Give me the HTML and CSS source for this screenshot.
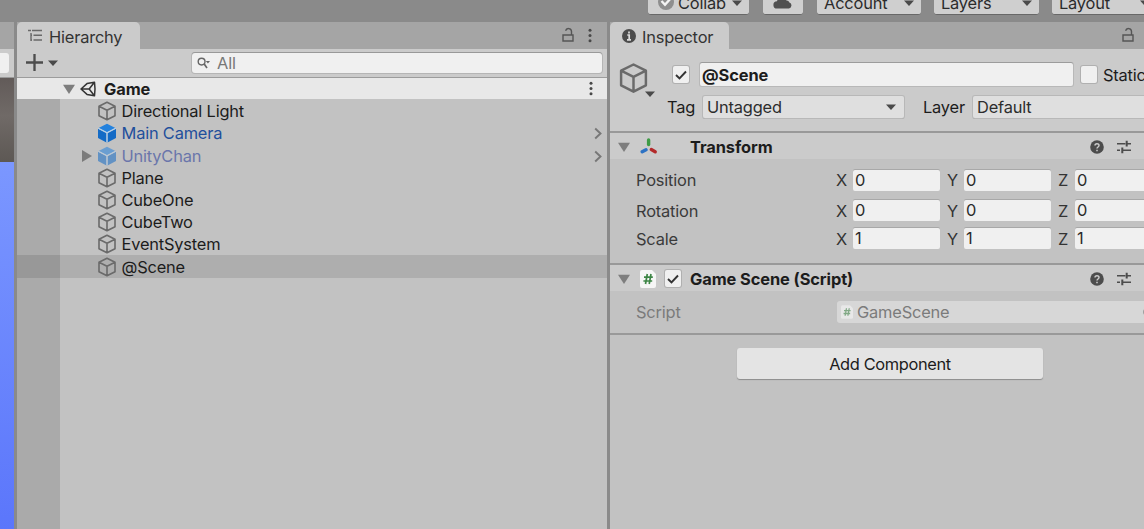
FILE: index.html
```html
<!DOCTYPE html>
<html lang="en">
<head>
<meta charset="utf-8">
<title>Hierarchy and Inspector</title>
<link rel="stylesheet" href="styles.css">
</head>
<body>
<svg class="defs" width="0" height="0">
  <symbol id="cube" viewBox="0 0 20 20"><path d="M10 1.3 18 5.3V14.7L10 18.8 2 14.7V5.3ZM2 5.3 10 9.3 18 5.3M10 9.3V18.8" fill="none" stroke="currentColor" stroke-width="1.6" stroke-linejoin="round"/></symbol>
  <symbol id="prefab" viewBox="0 0 20 20"><path class="p-top" d="M10 .8 18.4 4.9 10 9.2 1.6 4.9Z"/><path class="p-side" d="M1 5.8 9.5 10.2V19.4L1 15ZM19 5.8 10.5 10.2V19.4L19 15Z"/><path class="p-seam" d="M1.4 5.2 10 9.7 18.6 5.2M10 9.7V19.2"/></symbol>
  <symbol id="down" viewBox="0 0 12 8" preserveAspectRatio="none"><path d="M0 .5H12L6 8Z" fill="currentColor"/></symbol>
  <symbol id="lock" viewBox="0 0 12 16"><path d="M1 8H11V14H1ZM9.5 8V4.5A3 3 0 0 0 3.6 3.8" fill="none" stroke="currentColor" stroke-width="1.4"/></symbol>
  <symbol id="dots" viewBox="0 0 4 16"><g fill="currentColor"><circle cx="2" cy="2.4" r="1.6"/><circle cx="2" cy="8" r="1.6"/><circle cx="2" cy="13.6" r="1.6"/></g></symbol>
  <symbol id="chev" viewBox="0 0 8 12"><path d="M1.2 1 6.5 6 1.2 11" fill="none" stroke="currentColor" stroke-width="1.9"/></symbol>
  <symbol id="check" viewBox="0 0 12 10"><path d="M1 5 4.5 8.5 11 1.5" fill="none" stroke="currentColor" stroke-width="1.9"/></symbol>
  <symbol id="help" viewBox="0 0 14 14"><circle cx="7" cy="7" r="6.8" fill="#4c4c4c"/><path d="M5 5.6C5 3 9 3 9 5.5 9 7 7 7 7 8.6M7 9.7V11.2" fill="none" stroke="#cbcbcb" stroke-width="1.5"/></symbol>
  <symbol id="preset" viewBox="0 0 14 14"><path d="M0 3.7H8.5M10 3.7H14M0 10.3H3M5.5 10.3H14" fill="none" stroke="#4c4c4c" stroke-width="1.4"/><path d="M9.7 .8V6.6M5.3 7.4V13.2" stroke="#4c4c4c" stroke-width="2"/></symbol>
  <symbol id="script" viewBox="0 0 16 18"><path d="M2 0H12L16 4V16Q16 18 14 18H2Q0 18 0 16V2Q0 0 2 0Z" fill="#f6f6f6"/><path d="M7.3 4 5.5 14M11 4 9.2 14M4 7.2H12.8M3.4 11H12.2" fill="none" stroke="#3d8545" stroke-width="1.7"/></symbol>
</svg>

<header class="topbar">
  <div class="tbtn collab"><svg class="badge" viewBox="0 0 16 16"><circle cx="8" cy="8" r="8" fill="#8e8e8e"/><path d="M3.5 7 7 10.8 13 4" fill="none" stroke="#f4f4f4" stroke-width="2.4"/></svg><span>Collab</span><svg class="arr"><use href="#down"/></svg></div>
  <div class="tbtn cloud"><svg width="20" height="14" viewBox="0 0 20 14"><path d="M4 13.5A3.6 3.6 0 0 1 4 6.3 5 5 0 0 1 13.4 5.6 3 3 0 0 1 16.4 7.4 3.2 3.2 0 0 1 16 13.5Z" fill="#505050"/></svg></div>
  <div class="tbtn account"><span>Account</span><svg class="arr"><use href="#down"/></svg></div>
  <div class="tbtn layers"><span>Layers</span><svg class="arr"><use href="#down"/></svg></div>
  <div class="tbtn layout"><span>Layout</span><svg class="arr"><use href="#down"/></svg></div>
</header>

<main class="dock">
  <aside class="scene">
    <div class="scene-tab"></div>
    <div class="scene-tools"><div class="scene-field"></div></div>
    <div class="scene-ground"></div>
    <div class="scene-sky"></div>
  </aside>

  <section class="hierarchy">
    <div class="tabs">
      <div class="tab htab">
        <svg class="listicon" viewBox="0 0 15 13"><path d="M0 1.5H3M4 1.5H14M5.5 6.2H14M5.5 11H14M3 4V12M3 6.2H4M3 11H4" fill="none" stroke="#696969" stroke-width="1.4"/></svg>
        <span>Hierarchy</span>
      </div>
      <svg class="lock"><use href="#lock"/></svg>
      <svg class="dots"><use href="#dots"/></svg>
    </div>
    <div class="toolbar">
      <svg class="plus" viewBox="0 0 16 16"><path d="M8 0V16M0 8H16" stroke="#4d4d4d" stroke-width="2.2"/></svg>
      <svg class="arr"><use href="#down"/></svg>
      <div class="search">
        <svg width="13" height="12" viewBox="0 0 13 12"><path d="M7.2 7 10 11" stroke="#666" stroke-width="1.7"/><circle cx="4.6" cy="4.6" r="3.4" fill="none" stroke="#666" stroke-width="1.4"/><path d="M8.8 4H13L10.9 6.6Z" fill="#666"/></svg>
        <span>All</span>
      </div>
    </div>
    <div class="game">
      <svg class="fold"><use href="#down"/></svg>
      <svg class="unity" viewBox="0 0 16 16"><path d="M14.5 1.2 7 2.6 1 8 7 13.4 14.5 14.8 15 8ZM1.5 8H9.2M9.2 8 14 1.8M9.2 8 14 14.2" fill="none" stroke="#333" stroke-width="1.5" stroke-linejoin="round"/></svg>
      <b>Game</b>
      <svg class="dots"><use href="#dots"/></svg>
    </div>
    <div class="tree">
      <div class="row"><svg class="ico"><use href="#cube"/></svg><span>Directional Light</span></div>
      <div class="row blue"><svg class="ico"><use href="#prefab"/></svg><span>Main Camera</span><svg class="chev"><use href="#chev"/></svg></div>
      <div class="row pale"><svg class="expand" viewBox="0 0 10 12"><path d="M0 0 10 6 0 12Z" fill="#7b7b7b"/></svg><svg class="ico"><use href="#prefab"/></svg><span>UnityChan</span><svg class="chev"><use href="#chev"/></svg></div>
      <div class="row"><svg class="ico"><use href="#cube"/></svg><span>Plane</span></div>
      <div class="row"><svg class="ico"><use href="#cube"/></svg><span>CubeOne</span></div>
      <div class="row"><svg class="ico"><use href="#cube"/></svg><span>CubeTwo</span></div>
      <div class="row"><svg class="ico"><use href="#cube"/></svg><span>EventSystem</span></div>
      <div class="row selected"><svg class="ico"><use href="#cube"/></svg><span>@Scene</span></div>
    </div>
  </section>

  <section class="inspector">
    <div class="tabs">
      <div class="tab itab">
        <svg class="info" viewBox="0 0 14 14"><circle cx="7" cy="7" r="7" fill="#4b4b4b"/><path d="M7 2.5V4.5M5.3 6H7.2V10.7M5 10.9H9" stroke="#ddd" stroke-width="1.7" fill="none"/></svg>
        <span>Inspector</span>
      </div>
      <svg class="lock"><use href="#lock"/></svg>
    </div>
    <div class="objhead">
      <div class="objicon"><svg class="bigcube"><use href="#cube"/></svg><svg class="arr"><use href="#down"/></svg></div>
      <div class="objfields">
        <div class="namerow">
          <div class="cb"><svg><use href="#check"/></svg></div>
          <div class="namefield"><b>@Scene</b></div>
          <div class="cb static-cb"></div>
          <span>Static</span>
        </div>
        <div class="tagrow">
          <span class="l-tag">Tag</span>
          <div class="drop tagdrop"><span>Untagged</span><svg class="arr"><use href="#down"/></svg></div>
          <span class="l-layer">Layer</span>
          <div class="drop layerdrop"><span>Default</span></div>
        </div>
      </div>
    </div>
    <div class="comphead">
      <svg class="fold"><use href="#down"/></svg>
      <svg class="axes" viewBox="0 0 18 18"><g fill="none" stroke-width="3.4" stroke-linecap="round"><path d="M8.6 2V6.6" stroke="#3e9b45"/><path d="M6 11.8 2.2 13.8" stroke="#2c72c4"/><path d="M11.3 11.6 15.2 13.8" stroke="#b32a2a"/></g></svg>
      <b class="h-tr">Transform</b>
      <svg class="help"><use href="#help"/></svg><svg class="preset"><use href="#preset"/></svg>
    </div>
    <div class="transform">
      <div class="vec"><span class="lab">Position</span><i>X</i><div class="num">0</div><i>Y</i><div class="num">0</div><i>Z</i><div class="num">0</div></div>
      <div class="vec"><span class="lab">Rotation</span><i>X</i><div class="num">0</div><i>Y</i><div class="num">0</div><i>Z</i><div class="num">0</div></div>
      <div class="vec"><span class="lab">Scale</span><i>X</i><div class="num">1</div><i>Y</i><div class="num">1</div><i>Z</i><div class="num">1</div></div>
    </div>
    <div class="comphead">
      <svg class="fold"><use href="#down"/></svg>
      <svg class="scr"><use href="#script"/></svg>
      <div class="cb"><svg><use href="#check"/></svg></div>
      <b class="h-gs">Game Scene (Script)</b>
      <svg class="help"><use href="#help"/></svg><svg class="preset"><use href="#preset"/></svg>
    </div>
    <div class="scriptrow">
      <span class="l-script">Script</span>
      <div class="objfield"><svg class="scr-s"><use href="#script"/></svg><span>GameScene</span><svg class="pick" viewBox="0 0 12 12"><circle cx="6" cy="6" r="5" fill="none" stroke="#888" stroke-width="1.5"/></svg></div>
    </div>
    <div class="addwrap"><div class="add"><span>Add Component</span></div></div>
  </section>
</main>
</body>
</html>
```

FILE: styles.css
```css
* { box-sizing: border-box; }
body {
  margin: 0; width: 1144px; height: 529px; overflow: hidden;
  display: flex; flex-direction: column;
  background: #8a8a8a; color: #1c1c1c;
  font: 16.4px/20px Inter, "Liberation Sans", sans-serif;
  letter-spacing: -.18px;
}
b { letter-spacing: -.08px; }
svg { flex: none; display: block; }
span, b { white-space: nowrap; flex: none; }
.defs { position: absolute; }
.arr { width: 10px; height: 6px; color: #4a4a4a; }

.topbar { height: 22px; flex: none; display: flex; padding-left: 648px; background: #8a8a8a; }
.tbtn {
  height: 27px; margin-top: -12px; flex: none; display: flex; align-items: center;
  background: #cfcfcf; border-bottom: 1px solid #686868; border-radius: 3px;
}
.tbtn span { margin-top: 4px; color: #2b2b2b; }
.tbtn .arr { margin-left: auto; margin-top: 3px; }
.collab { width: 101px; margin-right: 14px; padding: 0 7px 0 10px; }
.collab .badge { width: 16px; height: 16px; margin: 1px 4px 0 0; }
.cloud { width: 40px; margin-right: 14px; justify-content: center; align-items: flex-end; padding-bottom: 5px; }
.account { width: 104px; margin-right: 13px; padding: 0 7px; }
.layers { width: 105px; margin-right: 13px; padding: 0 7px; }
.layout { width: 105px; padding: 0 7px; }

.dock { flex: 1; min-height: 0; display: flex; }
.scene { width: 14px; margin-right: 3px; display: flex; flex-direction: column; }
.scene-tab { height: 27px; background: #a5a5a5; }
.scene-tools { height: 28px; padding-top: 4px; background: #cbcbcb; }
.scene-field { width: 9px; height: 20px; background: #f0f0f0; border-radius: 0 3px 3px 0; }
.scene-ground { height: 85px; background: linear-gradient(#625b59, #706a67 45%, #5d5854); border-top: 1px solid #999; }
.scene-sky { flex: 1; background: linear-gradient(#7b97ff, #5b76fb); }

.hierarchy { width: 590px; margin-right: 3px; display: flex; flex-direction: column; background: #c2c2c2; }
.tabs { height: 27px; flex: none; display: flex; align-items: center; background: #a5a5a5; }
.tab { height: 27px; display: flex; align-items: center; background: #cbcbcb; border-radius: 5px 5px 0 0; color: #333; }
.tab span { margin-top: 3px; }
.htab { width: 123px; padding-left: 11px; }
.listicon { width: 15px; height: 13px; margin-right: 6px; }
.lock { width: 12px; height: 16px; margin-top: -1px; color: #555; }
.hierarchy .lock { margin-left: auto; }
.dots { width: 4px; height: 15px; color: #484848; }
.tabs .dots { margin: -1px 15px 0 14px; }
.toolbar { height: 29px; flex: none; display: flex; align-items: center; padding: 0 5px 1px 9px; background: #cbcbcb; border-bottom: 1px solid #9c9c9c; }
.plus { width: 17px; height: 17px; margin-right: 5px; }
.search { width: 410px; height: 20px; margin-left: auto; padding-left: 5px; display: flex; align-items: center; gap: 7px; background: #f0f0f0; border-radius: 3px; box-shadow: 0 -1px 0 #999, 0 0 0 1px #b5b5b5; color: #777; }
.game { height: 21px; flex: none; display: flex; align-items: center; padding: 0 14px 0 46px; background: #e8e8e8; }
.fold { width: 12px; height: 10px; color: #7e7e7e; }
.unity { width: 16px; height: 16px; margin: 0 8px 0 5px; }
.game .dots { margin-left: auto; }
.tree { flex: 1; padding-top: 1px; background: linear-gradient(90deg, #aaa 43px, #c2c2c2 43px); }
.row { height: 22.2px; display: flex; align-items: center; padding: 0 5px 0 80px; }
.ico { width: 20px; height: 20px; margin-right: 4.5px; color: #6a6a6a; }
.selected { padding-top: 1px; background: linear-gradient(90deg, #989898 43px, #aeaeae 43px); }
.blue { color: #1f4f9c; }
.pale { color: #6a76ab; padding-left: 65px; padding-top: 2px; }
.expand { width: 10px; height: 12px; margin-right: 5px; }
.p-top { fill: #2482de; }
.p-side { fill: #146bc6; }
.p-seam { fill: none; stroke: #b5d2ee; stroke-width: 1.1; }
.pale .ico { opacity: .55; }
.chev { width: 8px; height: 13px; margin-left: auto; color: #777; }

.inspector { width: 534px; flex: none; overflow: hidden; display: flex; flex-direction: column; background: #c2c2c2; }
.itab { width: 119px; padding-left: 12px; }
.info { width: 14px; height: 14px; margin: 1px 6px 0 0; }
.inspector .tabs .lock { margin: -1px 10px 0 auto; }
.objhead { height: 82px; flex: none; display: flex; background: #cbcbcb; }
.objicon { width: 57px; padding: 13px 0 0 8px; flex: none; }
.bigcube { width: 31px; height: 32px; color: #6a6a6a; }
.objicon .arr { margin-left: 27px; margin-top: -3px; }
.objfields { flex: none; }
.namerow { height: 25px; margin-top: 13px; display: flex; align-items: center; padding-left: 6px; }
.cb { width: 16px; height: 17px; flex: none; display: grid; place-items: center; background: #f0f0f0; border-radius: 2px; box-shadow: 0 0 0 1px #b0b0b0; color: #333; }
.cb svg { width: 12px; height: 10px; }
.namefield { width: 373px; height: 23px; margin-left: 11px; padding-left: 2px; display: flex; align-items: center; background: #f0f0f0; border-radius: 2px; box-shadow: 0 -1px 0 #9c9c9c, 0 0 0 1px #b8b8b8; }
.static-cb { margin: 0 6px 0 8px; }
.tagrow { height: 24px; margin-top: 8px; display: flex; align-items: center; }
.l-tag { width: 36px; }
.drop { height: 22px; display: flex; align-items: center; padding: 0 8px 0 4px; background: #dfdfdf; border-radius: 2px; box-shadow: 0 0 0 1px #b8b8b8, 0 1px 0 #8f8f8f; color: #2d2d2d; }
.drop .arr { margin-left: auto; }
.tagdrop { width: 201px; }
.l-layer { width: 50px; margin-left: 19px; }
.layerdrop { width: 190px; }
.comphead { height: 28px; flex: none; display: flex; align-items: center; padding: 1px 13px 0 8px; background: #cbcbcb; border-top: 2px solid #999; }
.axes { width: 18px; height: 18px; margin: 0 0 0 10px; }
.h-tr { margin-left: 32px; }
.scr { width: 16px; height: 18px; margin: 0 9px 0 10px; }
.h-gs { margin-left: 9px; }
.help { width: 14px; height: 14px; margin-left: auto; }
.preset { width: 14px; height: 14px; margin-left: 13px; }
.transform { height: 104px; flex: none; padding: 10px 0 0 26px; display: grid; grid-template-rows: 30.5px 28px 28px; align-content: start; }
.vec { display: flex; align-items: center; height: 22px; }
.lab { width: 200px; color: #3a3a3a; }
.vec i { font-style: normal; width: 17px; color: #333; }
.num { width: 87px; height: 21px; flex: none; margin-right: 7px; padding-left: 2px; background: #f0f0f0; border-radius: 2px; box-shadow: 0 -1px 0 #a8a8a8; color: #2b2b2b; }
.scriptrow { height: 44px; flex: none; display: flex; align-items: center; padding-left: 26px; border-bottom: 2px solid #999; color: #7b7b7b; }
.l-script { width: 201px; }
.objfield { width: 330px; height: 22px; flex: none; display: flex; align-items: center; padding-left: 4px; background: #d7d7d7; border-radius: 3px 0 0 3px; }
.scr-s { width: 12px; height: 14px; margin-right: 4px; opacity: .55; }
.pick { width: 12px; height: 12px; margin-left: 194px; }
.addwrap { padding: 13px 0 0 127px; }
.add { width: 306px; height: 31px; display: grid; place-items: center; background: #e4e4e4; border-radius: 3px; box-shadow: 0 1px 1px #8c8c8c; letter-spacing: -.35px; }
```
